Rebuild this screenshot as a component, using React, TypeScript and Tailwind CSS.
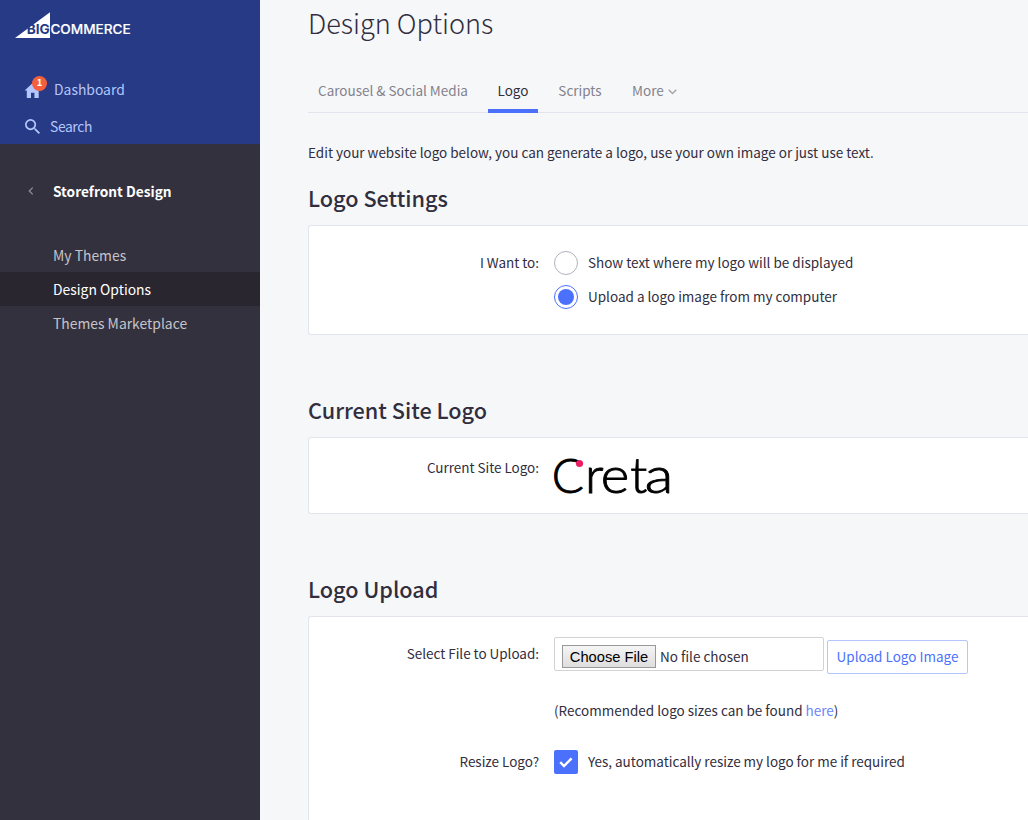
import type { ReactNode } from "react";

const tabs = [
  { label: "Carousel & Social Media", width: "w-[170px]" },
  { label: "Logo", width: "w-[50px]", active: true },
  { label: "Scripts", width: "w-[64px]" },
];

const navItems = [
  { label: "My Themes" },
  { label: "Design Options", active: true },
  { label: "Themes Marketplace" },
];

function BigCommerceLogo() {
  return (
    <svg width="118" height="28" viewBox="0 0 118 28" className="block">
      <path d="M0 26 L35 0.3 V26 Z" fill="#fff" />
      <g fontFamily="Inter, 'Liberation Sans', sans-serif" fontSize="13.4">
        <text x="11.7" y="21.9" fill="#273a86" fontWeight="700" textLength="23" lengthAdjust="spacingAndGlyphs">BIG</text>
        <text x="35.4" y="21.9" fill="#fff" fontWeight="500" stroke="#fff" strokeWidth="0.15" textLength="80.4" lengthAdjust="spacingAndGlyphs">COMMERCE</text>
      </g>
    </svg>
  );
}

function CretaLogo() {
  return (
    <svg width="120" height="40" viewBox="0 0 120 40" className="block shrink-0 overflow-visible">
      <g fontFamily="Lato, 'Liberation Sans', sans-serif" fontWeight="300" fontSize="50" fill="#000" stroke="#000" strokeWidth="0.9">
        <text x="-2.2" y="36.6" fontSize="47.5">C</text>
        <text x="31" y="36.6" textLength="18.6" lengthAdjust="spacingAndGlyphs">r</text>
        <text x="46.8" y="36.6" textLength="28.5" lengthAdjust="spacingAndGlyphs">e</text>
        <text x="76.3" y="36.6" textLength="17" lengthAdjust="spacingAndGlyphs">t</text>
        <text x="90.8" y="36.6" textLength="28.5" lengthAdjust="spacingAndGlyphs">a</text>
      </g>
      <circle cx="25.5" cy="7.5" r="3.6" fill="#e91e63" />
    </svg>
  );
}

function Sidebar() {
  return (
    <aside className="flex w-[260px] shrink-0 flex-col bg-[#34313f] text-[13.9px]">
      <div className="h-36 bg-[#273a86] text-[#b4c6fb]">
        <div className="h-[70px] pt-3 pl-[15px]">
          <BigCommerceLogo />
        </div>
        <a className="flex h-[37px] items-center pl-6">
          <span className="relative mr-[13px] flex h-[24px] w-[17px] items-end pb-[3px]">
            <svg width="17" height="15" viewBox="0 0 17 15" fill="#b4c6fb">
              <path d="M8.7 0 L17 7.5 H14.7 V15 H10.4 V9.7 H7 V15 H2.8 V7.5 H0.6 Z" />
            </svg>
            <span className="absolute -top-[1px] left-[8px] flex size-[15px] items-center justify-center rounded-full bg-[#f4603d] text-[9.5px] leading-none font-bold text-white">
              1
            </span>
          </span>
          <span>Dashboard</span>
        </a>
        <a className="flex h-[37px] items-center pl-[25px]">
          <svg width="15" height="15" viewBox="3 3 17.49 17.49" className="mt-[2px] mr-[10px]" fill="#b4c6fb">
            <path d="M15.5 14h-.79l-.28-.27A6.47 6.47 0 0 0 16 9.5 6.5 6.5 0 1 0 9.5 16c1.61 0 3.09-.59 4.23-1.57l.27.28v.79l5 4.99L20.49 19l-4.99-5zm-6 0C7.01 14 5 11.99 5 9.5S7.01 5 9.5 5 14 7.01 14 9.5 11.99 14 9.5 14z" />
          </svg>
          <span className="tracking-[-0.4px]">Search</span>
        </a>
      </div>
      <a className="flex h-24 items-center pl-[28px] text-white">
        <svg width="6" height="8" viewBox="0 0 6 8" fill="none" stroke="#8f8c98" strokeWidth="1.3" className="mr-[19px] -mt-[2px]">
          <path d="M4.7 0.6 L1.3 4 L4.7 7.4" />
        </svg>
        <span className="-mt-[2px] text-[13.7px] font-bold">Storefront Design</span>
      </a>
      <nav className="-mt-[2px] flex flex-col">
        {navItems.map((item) => (
          <a
            key={item.label}
            className={
              item.active
                ? "flex h-[34px] items-center bg-[#2a2630] pl-[53px] text-white"
                : "flex h-[34px] items-center pl-[53px] text-[#c5c4c9]"
            }
          >
            {item.label}
          </a>
        ))}
      </nav>
    </aside>
  );
}

function SectionHeading({ children }: { children: ReactNode }) {
  return <h2 className="h-[38px] shrink-0 text-[21.65px] leading-[22px] font-medium text-[#312e3e]">{children}</h2>;
}

function Label({ children }: { children: ReactNode }) {
  return <div className="w-[230px] shrink-0 text-right tracking-[-0.03px]">{children}</div>;
}

function Radio({ checked, label }: { checked?: boolean; label: string }) {
  return (
    <label className="flex h-[34px] items-center gap-[10px]">
      <span
        className={
          checked
            ? "flex size-6 items-center justify-center rounded-full border border-[#4b71fc]"
            : "flex size-6 items-center justify-center rounded-full border border-[#b0b3bd]"
        }
      >
        {checked && <span className="size-4 rounded-full bg-[#4b71fc]" />}
      </span>
      <span className="pb-[2px]">{label}</span>
    </label>
  );
}

export default function App() {
  return (
    <div className="flex h-[820px] w-[1028px] overflow-hidden bg-[#f6f7f9] font-['Noto_Sans_CJK_SC','Noto_Sans',sans-serif] text-[13.5px] leading-[20px] whitespace-nowrap text-[#312e3e]">
      <Sidebar />
      <main className="flex min-w-0 flex-1 flex-col pl-12">
        <h1 className="h-[71px] shrink-0 pt-[3px] text-[27.1px] leading-[40px] font-light">Design Options</h1>
        <div className="flex h-[42px] shrink-0 gap-[10px] border-b border-[#e2e5ee] text-[#84828d]">
          {tabs.map((tab) => (
            <a
              key={tab.label}
              className={
                tab.active
                  ? `flex h-[42px] justify-center border-b-4 border-[#4b71fc] pt-[9px] text-[#312e3e] ${tab.width}`
                  : `flex h-[42px] justify-center pt-[9px] ${tab.width}`
              }
            >
              {tab.label}
            </a>
          ))}
          <a className="flex h-[42px] gap-[4px] px-[10px] pt-[9px]">
            More
            <svg width="9" height="6" viewBox="0 0 9 6" fill="none" stroke="#a3a2aa" strokeWidth="1.3" className="mt-[9px]">
              <path d="M0.7 0.7 L4.5 4.5 L8.3 0.7" />
            </svg>
          </a>
        </div>
        <p className="mt-[29px] mb-[25px] h-5 shrink-0">
          Edit your website logo below, you can generate a logo, use your own image or just use text.
        </p>

        <SectionHeading>Logo Settings</SectionHeading>
        <section className="flex h-[110px] shrink-0 gap-[15px] rounded-l-[3px] border border-r-0 border-[#e2e5ee] bg-white pt-[20px]">
          <div className="pt-[6px]">
            <Label>I Want to:</Label>
          </div>
          <div>
            <Radio label="Show text where my logo will be displayed" />
            <Radio checked label="Upload a logo image from my computer" />
          </div>
        </section>

        <div className="h-16 shrink-0" />
        <SectionHeading>Current Site Logo</SectionHeading>
        <section className="flex h-[77px] shrink-0 gap-[15px] rounded-l-[3px] border border-r-0 border-[#e2e5ee] bg-white pt-[18px]">
          <div className="pt-px">
            <Label>Current Site Logo:</Label>
          </div>
          <CretaLogo />
        </section>

        <div className="h-16 shrink-0" />
        <SectionHeading>Logo Upload</SectionHeading>
        <section className="flex h-[220px] shrink-0 flex-col rounded-tl-[3px] border-t border-l border-[#e2e5ee] bg-white pt-[20px]">
          <div className="flex h-[63px] gap-[15px]">
            <div className="pt-[6px]">
              <Label>Select File to Upload:</Label>
            </div>
            <div className="flex gap-[3px]">
              <div className="flex h-[34px] w-[270px] items-center rounded-[2px] border border-[#d3d3d6] pt-[4px] pl-[7px]">
                <button className="mr-[4px] h-[23px] w-[94px] border border-[#999] bg-linear-to-b from-[#f5f5f5] to-[#dedede] pt-px font-['Liberation_Sans',Arial,sans-serif] text-[14.7px] leading-[20px] text-black">
                  Choose File
                </button>
                No file chosen
              </div>
              <button className="mt-[3px] h-[34px] w-[141px] rounded-[2px] border border-[#b4c6fb] pb-[2px] text-[#4b71fc]">
                Upload Logo Image
              </button>
            </div>
          </div>
          <p className="h-[50px] pl-[245px]">
            (Recommended logo sizes can be found <a className="text-[#6b85fd]">here</a>)
          </p>
          <div className="flex h-6 items-center gap-[15px]">
            <div className="pb-[2px]">
              <Label>Resize Logo?</Label>
            </div>
            <label className="flex items-center gap-[10px]">
              <span className="flex size-6 items-center justify-center rounded-[2px] bg-[#4b71fc]">
                <svg width="14" height="11" viewBox="0 0 14 11" fill="none" stroke="#fff" strokeWidth="2.4">
                  <path d="M1.2 5.2 L5 9 L12.6 1.4" />
                </svg>
              </span>
              <span className="pb-[2px] tracking-[-0.02px]">Yes, automatically resize my logo for me if required</span>
            </label>
          </div>
        </section>
      </main>
    </div>
  );
}
